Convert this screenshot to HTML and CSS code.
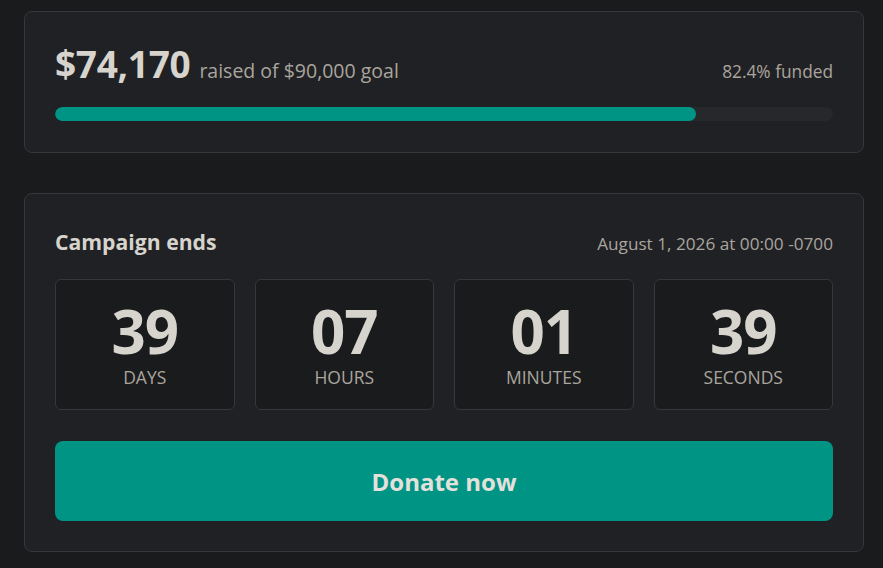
FILE: index.html
```html
<!DOCTYPE html>
<html lang="en">
<head>
<meta charset="utf-8">
<title>Campaign</title>
<link rel="stylesheet" href="styles.css">
</head>
<body>
<main class="page">
  <section class="card card-funding">
    <div class="raised-row">
      <div class="raised">
        <span class="amount">$74,170</span>
        <span class="goal">raised of $90,000 goal</span>
      </div>
      <span class="funded">82.4% funded</span>
    </div>
    <div class="track"><div class="fill" style="width:82.4%"></div></div>
  </section>

  <section class="card">
    <div class="ends-row">
      <h2 class="ends-title">Campaign ends</h2>
      <span class="ends-date">August 1, 2026 at 00:00 -0700</span>
    </div>
    <div class="countdown">
      <div class="unit"><span class="num">39</span><span class="label">Days</span></div>
      <div class="unit"><span class="num">07</span><span class="label">Hours</span></div>
      <div class="unit"><span class="num">01</span><span class="label">Minutes</span></div>
      <div class="unit"><span class="num">39</span><span class="label">Seconds</span></div>
    </div>
    <button class="donate" type="button">Donate now</button>
  </section>
</main>
</body>
</html>
```

FILE: styles.css
```css
* { box-sizing: border-box; }
html, body { margin: 0; padding: 0; }
body {
  background: #1a1b1d;
  font-family: "Open Sans", "Noto Sans", sans-serif;
  color: #d7d4ce;
}
.page {
  padding: 11px 19px 0 24px;
  display: flex;
  flex-direction: column;
  gap: 40px;
}
.card {
  background: #202124;
  border: 1px solid #36373a;
  border-radius: 8px;
  padding: 30px;
}
.card-funding { padding-bottom: 31px; }
.raised-row {
  display: flex;
  justify-content: space-between;
  align-items: baseline;
  height: 44px;
}
.raised { display: flex; align-items: baseline; gap: 9px; }
.amount {
  font-size: 37px;
  font-weight: 700;
  line-height: 44px;
  letter-spacing: -0.3px;
  color: #d7d4ce;
}
.goal { font-size: 19.5px; line-height: 24px; color: #aaa59e; }
.funded { font-size: 17.3px; line-height: 24px; color: #aaa59e; }
.track {
  margin-top: 21px;
  height: 14px;
  border-radius: 7px;
  background: #26282b;
  overflow: hidden;
}
.fill {
  height: 100%;
  background: #009485;
  border-radius: 7px;
}
.ends-row {
  display: flex;
  justify-content: space-between;
  align-items: baseline;
  height: 36px;
}
.ends-title {
  margin: 0;
  font-size: 21.2px;
  font-weight: 700;
  line-height: 36px;
  color: #d7d4ce;
}
.ends-date { font-size: 17.2px; color: #aaa59e; }
.countdown {
  margin-top: 19px;
  display: grid;
  grid-template-columns: repeat(4, 1fr);
  gap: 20px;
}
.unit {
  background: #1a1b1d;
  border: 1px solid #36373a;
  border-radius: 6px;
  height: 131px;
  display: flex;
  flex-direction: column;
  align-items: center;
  justify-content: center;
  padding-top: 1px;
}
.num {
  font-size: 60px;
  font-weight: 700;
  line-height: 58px;
  letter-spacing: -1px;
  color: #d7d4ce;
}
.label {
  margin-top: 5px;
  font-size: 17.5px;
  text-transform: uppercase;
  color: #aaa59e;
  line-height: 24px;
}
.donate {
  display: block;
  margin-top: 31px;
  width: 100%;
  height: 80px;
  border: 0;
  border-radius: 8px;
  background: #009485;
  color: #e4e1dc;
  font-family: inherit;
  font-size: 24px;
  font-weight: 700;
  cursor: pointer;
}
```
